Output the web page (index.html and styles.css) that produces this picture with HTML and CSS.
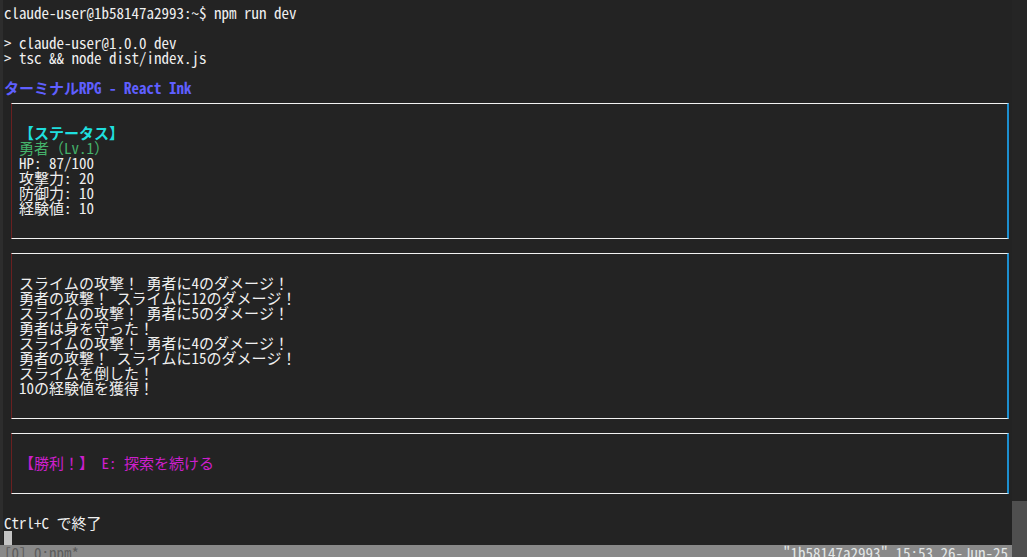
FILE: index.html
```html
<!DOCTYPE html>
<html lang="ja">
<head>
<meta charset="utf-8">
<title>Terminal RPG</title>
<link rel="stylesheet" href="styles.css">
</head>
<body>
<div class="screen">
  <div class="term">
    <div class="line">claude-user@1b58147a2993:~$ npm run dev</div>
    <div class="line"></div>
    <div class="line">&gt; claude-user@1.0.0 dev</div>
    <div class="line">&gt; tsc &amp;&amp; node dist/index.js</div>
    <div class="line"></div>
    <div class="line title">ターミナルRPG - React Ink</div>

    <div class="box box-first">
      <div class="line heading">【ステータス】</div>
      <div class="line hero">勇者（Lv.1）</div>
      <div class="line">HP: 87/100</div>
      <div class="line">攻撃力: 20</div>
      <div class="line">防御力: 10</div>
      <div class="line">経験値: 10</div>
    </div>

    <div class="box">
      <div class="line">スライムの攻撃！ 勇者に4のダメージ！</div>
      <div class="line">勇者の攻撃！ スライムに12のダメージ！</div>
      <div class="line">スライムの攻撃！ 勇者に5のダメージ！</div>
      <div class="line">勇者は身を守った！</div>
      <div class="line">スライムの攻撃！ 勇者に4のダメージ！</div>
      <div class="line">勇者の攻撃！ スライムに15のダメージ！</div>
      <div class="line">スライムを倒した！</div>
      <div class="line">10の経験値を獲得！</div>
    </div>

    <div class="box">
      <div class="line victory">【勝利！】 E: 探索を続ける</div>
    </div>

    <div class="line exit">Ctrl+C で終了</div>
    <div class="line"><span class="cursor"></span></div>
    <div class="status">
      <span class="status-left">[0] 0:npm*</span>
      <span class="status-right">"1b58147a2993" 15:53 26-Jun-25</span>
    </div>
  </div>
  <div class="scrollbar"><div class="thumb"></div></div>
</div>
</body>
</html>
```

FILE: styles.css
```css
html, body {
  margin: 0;
  padding: 0;
  height: 100%;
  overflow: hidden;
  background: #232323;
}

.screen {
  display: flex;
  height: 557px;
}

.term {
  flex: 1;
  min-width: 0;
  border-left: 3px solid #2d2d2d;
  padding: 5px 0 0 1px;
  font-family: "Noto Sans Mono CJK JP", "Noto Sans CJK JP", "DejaVu Sans Mono", monospace;
  font-size: 15px;
  line-height: 15px;
  color: #f0f0f0;
}

.line {
  height: 15px;
  white-space: pre;
}

.title {
  color: #5f5fff;
  font-weight: bold;
}

.heading {
  color: #1fdede;
  font-weight: bold;
}

.hero {
  color: #45b26b;
}

.victory {
  color: #cc1fcc;
}

.box {
  margin: 14px 3px 0 7px;
  padding: 21px 0 23px 7px;
  border-top: 1px solid #f2f2f2;
  border-bottom: 1px solid #f2f2f2;
  border-left: 1px solid #6a2020;
  border-right: 2px solid #1d8fcf;
}

.box-first {
  margin-top: 8px;
}

.exit {
  margin-top: 21px;
}

.cursor {
  display: inline-block;
  width: 8px;
  height: 14px;
  margin-top: 1px;
  background: #c4c4c4;
  vertical-align: top;
}

.status {
  display: flex;
  justify-content: space-between;
  height: 15px;
  margin-left: -4px;
  padding: 0 4px;
  background: #898989;
  white-space: pre;
}

.status-left {
  color: #5c5c5c;
}

.status-right {
  color: #e2e6e6;
}

.scrollbar {
  width: 15px;
  display: flex;
  flex-direction: column;
  justify-content: flex-end;
  background: #252525;
}

.thumb {
  height: 56px;
  background: #4f4f4f;
}
```
